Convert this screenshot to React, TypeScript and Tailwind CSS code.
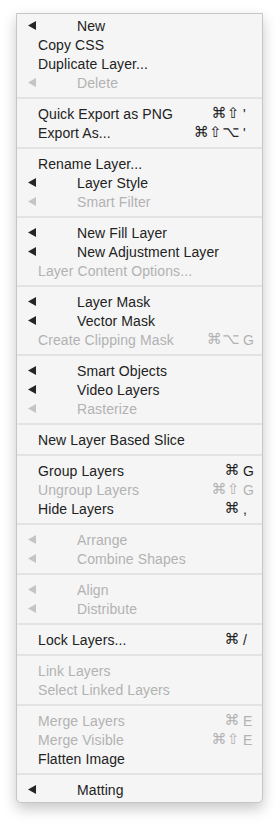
type Item =
  | { kind: "sep" }
  | { kind: "item"; label: string; sub?: boolean; disabled?: boolean; mods?: string; keyChar?: string };

const sep: Item = { kind: "sep" };
const it = (label: string, opts: Partial<Omit<Extract<Item, { kind: "item" }>, "kind" | "label">> = {}): Item => ({
  kind: "item",
  label,
  ...opts,
});

const items: Item[] = [
  it("New", { sub: true }),
  it("Copy CSS"),
  it("Duplicate Layer..."),
  it("Delete", { sub: true, disabled: true }),
  sep,
  it("Quick Export as PNG", { mods: "⌘⇧", keyChar: "'" }),
  it("Export As...", { mods: "⌘⇧⌥", keyChar: "'" }),
  sep,
  it("Rename Layer..."),
  it("Layer Style", { sub: true }),
  it("Smart Filter", { sub: true, disabled: true }),
  sep,
  it("New Fill Layer", { sub: true }),
  it("New Adjustment Layer", { sub: true }),
  it("Layer Content Options...", { disabled: true }),
  sep,
  it("Layer Mask", { sub: true }),
  it("Vector Mask", { sub: true }),
  it("Create Clipping Mask", { disabled: true, mods: "⌘⌥", keyChar: "G" }),
  sep,
  it("Smart Objects", { sub: true }),
  it("Video Layers", { sub: true }),
  it("Rasterize", { sub: true, disabled: true }),
  sep,
  it("New Layer Based Slice"),
  sep,
  it("Group Layers", { mods: "⌘", keyChar: "G" }),
  it("Ungroup Layers", { disabled: true, mods: "⌘⇧", keyChar: "G" }),
  it("Hide Layers", { mods: "⌘", keyChar: "," }),
  sep,
  it("Arrange", { sub: true, disabled: true }),
  it("Combine Shapes", { sub: true, disabled: true }),
  sep,
  it("Align", { sub: true, disabled: true }),
  it("Distribute", { sub: true, disabled: true }),
  sep,
  it("Lock Layers...", { mods: "⌘", keyChar: "/" }),
  sep,
  it("Link Layers", { disabled: true }),
  it("Select Linked Layers", { disabled: true }),
  sep,
  it("Merge Layers", { disabled: true, mods: "⌘", keyChar: "E" }),
  it("Merge Visible", { disabled: true, mods: "⌘⇧", keyChar: "E" }),
  it("Flatten Image"),
  sep,
  it("Matting", { sub: true }),
];

function Arrow({ disabled }: { disabled?: boolean }) {
  return (
    <svg width="8" height="9" viewBox="0 0 8 9" className={disabled ? "fill-[#c4c4c4]" : "fill-[#262626]"}>
      <polygon points="8,0 8,9 0,4.5" />
    </svg>
  );
}

export default function App() {
  return (
    <div className="min-h-screen bg-white pt-[13px] font-['Liberation_Sans',Arial,sans-serif]">
      <div className="ml-[16px] w-[247px] rounded-b-[5px] border border-[#c6c6c6] bg-[#f5f5f5] pt-[2px] pb-[3px] text-[14px] shadow-[0_6px_14px_rgba(0,0,0,0.22)]">
        {items.map((item, i) =>
          item.kind === "sep" ? (
            <div key={i} className="my-[5px] h-[2px] bg-[#e3e3e3]" />
          ) : (
            <div
              key={i}
              className={`flex h-[19px] items-center leading-none tracking-[0.1px] ${
                item.disabled ? "text-[#b2b2b2]" : "text-[#222222]"
              } ${item.sub ? "pl-[11px]" : "pl-[21px]"}`}
            >
              {item.sub && (
                <span className="flex w-[49px] items-center">
                  <Arrow disabled={item.disabled} />
                </span>
              )}
              <span className="flex-1 whitespace-nowrap">{item.label}</span>
              {item.keyChar && (
                <span className="flex items-center pr-[9px]">
                  <span className="mr-[3px] font-['DejaVu_Sans',sans-serif] text-[15px] tracking-[0.5px]">{item.mods}</span>
                  <span className="w-[10px]">{item.keyChar}</span>
                </span>
              )}
            </div>
          )
        )}
      </div>
    </div>
  );
}
